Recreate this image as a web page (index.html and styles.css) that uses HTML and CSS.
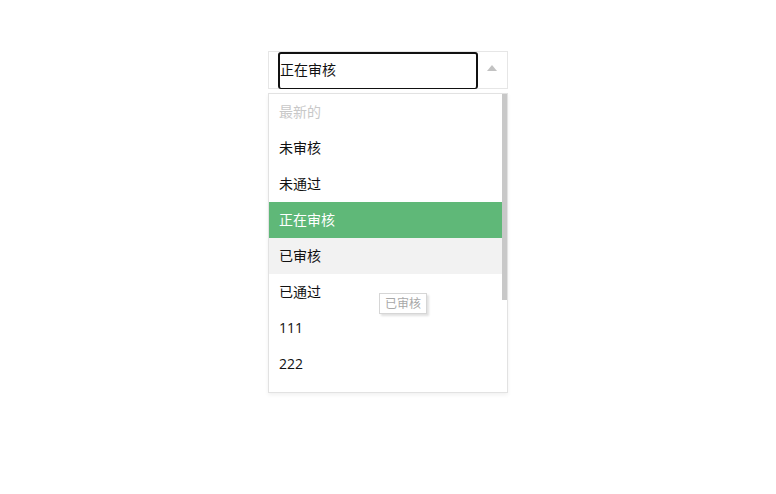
FILE: index.html
```html
<!DOCTYPE html>
<html lang="zh-CN">
<head>
<meta charset="utf-8">
<title>select</title>
<link rel="stylesheet" href="styles.css">
</head>
<body>
<div class="page">
  <div class="select">
    <div class="select-title">
      <span class="select-input">正在审核</span>
      <i class="edge"></i>
    </div>
    <div class="dropdown">
      <dl class="options">
        <dd class="opt disabled">最新的</dd>
        <dd class="opt">未审核</dd>
        <dd class="opt">未通过</dd>
        <dd class="opt selected">正在审核</dd>
        <dd class="opt hover">已审核</dd>
        <dd class="opt">已通过</dd>
        <dd class="opt">111</dd>
        <dd class="opt">222</dd>
      </dl>
      <div class="scroll-track"><div class="scroll-thumb"></div></div>
    </div>
    <div class="tooltip">已审核</div>
  </div>
</div>
</body>
</html>
```
FILE: styles.css
```css
html, body {
  margin: 0;
  padding: 0;
  background: #fff;
}
body {
  font-family: "Open Sans", "Noto Sans CJK SC", sans-serif;
  font-size: 14px;
  color: #111;
  min-height: 494px;
}
.page {
  padding: 51px 0 0 268px;
  min-height: 443px;
}
.select {
  position: relative;
  width: 240px;
}
.select-title {
  position: relative;
  box-sizing: border-box;
  height: 38px;
  border: 1px solid #e6e6e6;
  padding: 0 29px 0 9px;
  display: flex;
}
.select-input {
  box-sizing: border-box;
  flex: 1;
  height: 37px;
  border: 2px solid #111;
  border-bottom-width: 1.5px;
  border-radius: 3px;
  line-height: 31px;
  color: #111;
  white-space: nowrap;
}
.edge {
  position: absolute;
  right: 10px;
  top: 13px;
  width: 0;
  height: 0;
  border-left: 5px solid transparent;
  border-right: 5px solid transparent;
  border-bottom: 6px solid #c2c2c2;
}
.dropdown {
  margin-top: 4px;
  box-sizing: border-box;
  width: 240px;
  height: 300px;
  border: 1px solid #e2e2e2;
  background: #fff;
  box-shadow: 0 2px 4px rgba(0, 0, 0, 0.06);
  display: flex;
}
.options {
  flex: 1;
  margin: 0;
  padding: 0;
  height: 298px;
  overflow: hidden;
}
.scroll-track {
  width: 5px;
  height: 298px;
}
.scroll-thumb {
  height: 206px;
  background: #c8c8c8;
}
.opt {
  margin: 0;
  padding: 0 10px;
  height: 36px;
  line-height: 36px;
  white-space: nowrap;
  color: #111;
}
.opt.disabled {
  color: #c8c8c8;
}
.opt.selected {
  background: #5fb878;
  color: #fff;
}
.opt.hover {
  background: #f2f2f2;
}
.tooltip {
  position: absolute;
  left: 111px;
  top: 242px;
  box-sizing: border-box;
  width: 48px;
  height: 21px;
  border: 1px solid #d6d6d6;
  background: #fff;
  box-shadow: 2px 2px 2px rgba(0, 0, 0, 0.12);
  font-size: 12px;
  line-height: 19px;
  color: #a8a8a8;
  text-align: center;
}
```
